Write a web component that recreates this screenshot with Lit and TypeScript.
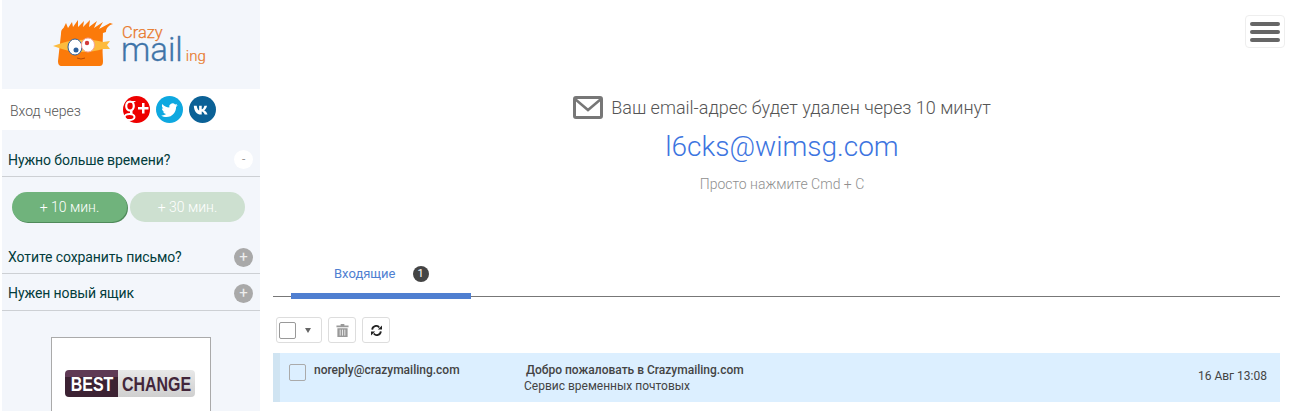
import { LitElement, html, css } from "lit";
import { customElement } from "lit/decorators.js";

@customElement("app-root")
export class AppRoot extends LitElement {
  static styles = css`
    :host { display: flex; width: 1289px; height: 411px; overflow: hidden; background: #fff; font-family: Roboto, "Noto Sans", sans-serif; color: #444; }
    * { box-sizing: border-box; }
    .side { width: 258px; margin-left: 2px; flex: none; background: #f3f6fb; height: 411px; overflow: hidden; }
    .logo { height: 89px; display: flex; padding: 19px 0 0 51px; gap: 6px; }
    .logotext { width: 100px; height: 50px; }
    .crazy { display: block; font-size: 16.5px; line-height: 16px; color: #e8792c; margin: 6px 0 0 1px; font-weight: 300; -webkit-text-stroke: 0.25px #e8792c; }
    .mailrow { display: flex; align-items: baseline; gap: 3px; margin-top: -6px; }
    .mail { font-size: 33px; line-height: 30px; color: #3f74a8; font-weight: 300; -webkit-text-stroke: 0.3px #3f74a8; }
    .ing { font-size: 15px; color: #e8792c; line-height: 14px; font-weight: 300; -webkit-text-stroke: 0.2px #e8792c; }
    .login { height: 41px; background: #fff; display: flex; align-items: center; padding: 2px 0 0 8px; font-size: 14px; font-weight: 300; color: #555; }
    .login span { width: 113px; }
    .soc { display: flex; gap: 6px; margin-top: -3px; }
    .soc svg { display: block; width: 27px; height: 27px; }
    .sec { display: flex; justify-content: space-between; align-items: center; padding: 0 7px 0 6px; font-size: 14px; letter-spacing: -0.1px; color: #023c3c; border-bottom: 1px solid #cdd0d4; }
    .s1 { height: 47px; padding-top: 13px; }
    .s2 { height: 51px; padding-top: 18px; }
    .s3 { height: 37px; padding-top: 2px; }
    .tog { width: 19px; height: 19px; border-radius: 50%; display: flex; align-items: center; justify-content: center; font-size: 15px; line-height: 15px; background: #a9a9a9; color: #eee; font-weight: 400; }
    .tog.open { background: #fff; color: #999; font-size: 12px; }
    .btns { display: flex; gap: 3px; padding: 15px 0 0 10px; height: 46px; }
    .btn { width: 115px; height: 30px; border-radius: 15px; display: flex; align-items: center; justify-content: center; font-size: 14px; font-weight: 300; color: #fff; }
    .b1 { background: #70b37c; box-shadow: 1px 1px 0 #4f8a5a; }
    .b2 { background: #cde0d0; }
    .ad { width: 160px; height: 120px; margin: 26px 0 0 49px; background: #fff; border: 1px solid #aaa; padding: 32px 0 0 13px; }
    .adlogo { display: flex; width: 130px; height: 27px; border-radius: 4px; overflow: hidden; font: 700 21px/27px "Liberation Sans", sans-serif; }
    .adl, .adr { display: flex; justify-content: center; min-width: 0; }
    .adl { flex: none; width: 53px; background: linear-gradient(#5f3a55 0 25%, #3c2233 25%); color: #fff; }
    .adr { flex: 1; background: linear-gradient(#e8e8e8, #cfcfcf); color: #43263a; }
    .adl span, .adr span { flex: none; display: block; transform: scaleX(0.76); }
    .main { flex: none; width: 1007px; margin-left: 13px; position: relative; }
    .head { height: 262px; padding: 94px 0 0 11px; display: flex; flex-direction: column; align-items: center; }
    .title { display: flex; align-items: center; gap: 8px; font-size: 18px; line-height: 28px; font-weight: 300; color: #555; }
    .title svg { display: block; width: 30px; height: 24px; }
    .addr { font-size: 28px; line-height: 34px; font-weight: 300; color: #3c74e0; margin-top: 8px; }
    .hint { font-size: 14px; line-height: 16px; font-weight: 300; color: #8f8f8f; margin-top: 12px; }
    .burger { position: absolute; top: 15px; left: 972px; width: 40px; height: 33px; border: 1px solid #eee; border-radius: 4px; display: flex; flex-direction: column; gap: 4px; padding: 6px 4px; background: #fff; }
    .burger i { display: block; flex: none; height: 4px; border-radius: 2px; background: #666; }
    .tabs { height: 35px; border-bottom: 1px solid #777; padding-left: 18px; }
    .tab { width: 180px; height: 37px; border-bottom: 6px solid #4f7fd1; display: flex; align-items: center; gap: 17px; padding: 0 0 8px 43px; font-size: 13px; font-weight: 400; color: #4f7fd1; }
    .badge { width: 16px; height: 16px; border-radius: 50%; background: #444; color: #fff; font-size: 11px; line-height: 16px; text-align: center; }
    .tools { display: flex; gap: 6px; padding: 20px 0 0 3px; height: 56px; }
    .tool { height: 26px; width: 28px; border: 1px solid #ddd; border-radius: 3px; display: flex; align-items: center; justify-content: center; }
    .tool svg { display: block; }
    .sel { width: 46px; justify-content: flex-start; padding-left: 2px; gap: 8px; }
    .cb { width: 17px; height: 17px; border: 1px solid #aaa; border-radius: 2px; flex: none; }
    .sel .cb { background: #fff; border-color: #999; }
    .caret { width: 0; height: 0; border: 3.5px solid transparent; border-top: 5px solid #666; border-bottom: 0; margin-left: 1px; }
    .row { height: 49px; background: #dcefff; border-left: 7px solid #d0e4f2; display: flex; font-size: 12px; color: #444; }
    .row .cb { margin: 11px 0 0 9px; }
    .from { width: 212px; margin-left: 8px; padding-top: 10px; line-height: 15px; font-weight: 500; }
    .msg { flex: 1; padding-top: 10px; line-height: 15px; }
    .subj { font-weight: 500; }
    .prev { margin: 1px 0 0 -2px; }
    .date { padding: 15px 13px 0 0; line-height: 16px; }
  `;

  render() {
    return html`
      <div class="side">
        <div class="logo">
          <svg width="62" height="50" viewBox="0 0 62 50">
            <path d="M8 15 C8 11 9 10 11 9 L50 10 C50 20 49 30 50 42 C50 46 49 47 46 47 L9 47 C6 47 5 45 5 42 Z" fill="#fb7a0a"/>
            <path d="M10 10 L13 4 L15 9 L19 3 L20 8 L25 1 L25 8 L31 2 L30 8 L37 1 L36 8 L44 2 L41 9 L50 3 L46 10 L57 4 L60 5 C56 6 53 9 53 13 L50 14 L12 14 Z" fill="#fb7a0a"/>
            <path d="M0 27 L9 24 C22 20 38 20 50 23 L57 22 L54 26 L57 30 L50 30 C38 34 20 34 9 30 Z" fill="#fdbb3d"/>
            <ellipse cx="22" cy="28" rx="7" ry="8" fill="#fff" stroke="#2c5f9a"/>
            <ellipse cx="35" cy="26" rx="6.500" ry="7" fill="#fff" stroke="#f4a39a"/>
            <circle cx="23" cy="31" r="2.500" fill="#2c5f9a"/>
            <circle cx="34" cy="24" r="2.200" fill="#d23a3a"/>
            <path d="M24 39 Q28 41 32 39" fill="none" stroke="#b84a05"/>
          </svg>
          <div class="logotext">
            <span class="crazy">Crazy</span>
            <div class="mailrow"><span class="mail">mail</span><span class="ing">ing</span></div>
          </div>
        </div>
        <div class="login">
          <span>Вход через</span>
          <div class="soc">
            <svg viewBox="0 0 27 27"><circle cx="13.500" cy="13.500" r="13.500" fill="#ee0000"/><ellipse cx="7" cy="10" rx="3.800" ry="4.500" fill="none" stroke="#fff" stroke-width="2.200"/><ellipse cx="6.500" cy="21" rx="5" ry="3" fill="none" stroke="#fff" stroke-width="2"/><path d="M4 5h9l-2 1.500H6zM7 14.500h2.500v3.500H7z" fill="#fff"/><path d="M15 11h4V7h2.500v4h4v2.500h-4v4H19v-4h-4z" fill="#fff"/></svg>
            <svg viewBox="0 0 28 28"><circle cx="14" cy="14" r="14" fill="#0ea8e0"/><path d="M22.500 9.300c-.6.300-1.300.5-2 .6.700-.4 1.300-1.100 1.500-1.900-.7.400-1.400.7-2.200.8a3.500 3.500 0 0 0-6 3.200c-2.900-.1-5.500-1.500-7.200-3.600-.9 1.600-.5 3.600 1.100 4.700-.6 0-1.100-.2-1.600-.4 0 1.700 1.200 3.100 2.800 3.500-.5.100-1 .1-1.600 0 .5 1.400 1.700 2.400 3.300 2.400a7 7 0 0 1-5.200 1.500c1.600 1 3.400 1.600 5.400 1.600 6.500 0 10.200-5.500 10-10.400.7-.5 1.300-1.200 1.700-2z" fill="#fff"/></svg>
            <svg viewBox="0 0 28 28"><circle cx="14" cy="14" r="14" fill="#0b6196"/><path d="M5 10h3c.4 2.500 1.500 4.500 2.500 5v-5h2.700v3.800c1.200-.2 2.300-1.800 2.800-3.800h2.700c-.4 2.300-1.800 4-3 4.800 1.300.7 2.800 2.300 3.500 4.400h-3c-.6-1.600-1.800-2.800-3-3v3h-.8C8 19.200 5.300 15.700 5 10z" fill="#fff"/></svg>
          </div>
        </div>
        <div class="sec s1"><span>Нужно больше времени?</span><span class="tog open">-</span></div>
        <div class="btns"><div class="btn b1">+ 10 мин.</div><div class="btn b2">+ 30 мин.</div></div>
        <div class="sec s2"><span>Хотите сохранить письмо?</span><span class="tog">+</span></div>
        <div class="sec s3"><span>Нужен новый ящик</span><span class="tog">+</span></div>
        <div class="ad"><div class="adlogo"><div class="adl"><span>BEST</span></div><div class="adr"><span>CHANGE</span></div></div></div>
      </div>
      <div class="main">
        <div class="burger"><i></i><i></i><i></i></div>
        <div class="head">
          <div class="title">
            <svg viewBox="0 0 30 24"><rect x="1.500" y="1.500" width="27" height="20" rx="1.500" fill="none" stroke="#777" stroke-width="3"/><path d="M2 3 L15 14 L28 3" fill="none" stroke="#777" stroke-width="2.500"/></svg>
            <span>Ваш email-адрес будет удален через 10 минут</span>
          </div>
          <div class="addr">l6cks@wimsg.com</div>
          <div class="hint">Просто нажмите Cmd + C</div>
        </div>
        <div class="tabs"><div class="tab"><span>Входящие</span><span class="badge">1</span></div></div>
        <div class="tools">
          <div class="tool sel"><div class="cb"></div><div class="caret"></div></div>
          <div class="tool">
            <svg width="13" height="13" viewBox="0 0 14 14"><path d="M5 0h4v1.500h4.500V3.500H.5V1.500H5z M1.500 4.500h11V14h-11z" fill="#999"/><path d="M4.500 6v6.500M7 6v6.500M9.500 6v6.500" stroke="#eee"/></svg>
          </div>
          <div class="tool">
            <svg width="11" height="11" viewBox="0 0 12 12"><path d="M1.300 5A4.300 4.300 0 0 1 9 2.700" fill="none" stroke="#222" stroke-width="2"/><path d="M7.500 5H12V.5z" fill="#222"/><path d="M10.700 7A4.300 4.300 0 0 1 3 9.300" fill="none" stroke="#222" stroke-width="2"/><path d="M4.500 7H0V11.500z" fill="#222"/></svg>
          </div>
        </div>
        <div class="row">
          <div class="cb"></div>
          <div class="from">noreply@crazymailing.com</div>
          <div class="msg"><div class="subj">Добро пожаловать в Crazymailing.com</div><div class="prev">Сервис временных почтовых</div></div>
          <div class="date">16 Авг 13:08</div>
        </div>
      </div>
    `;
  }
}
